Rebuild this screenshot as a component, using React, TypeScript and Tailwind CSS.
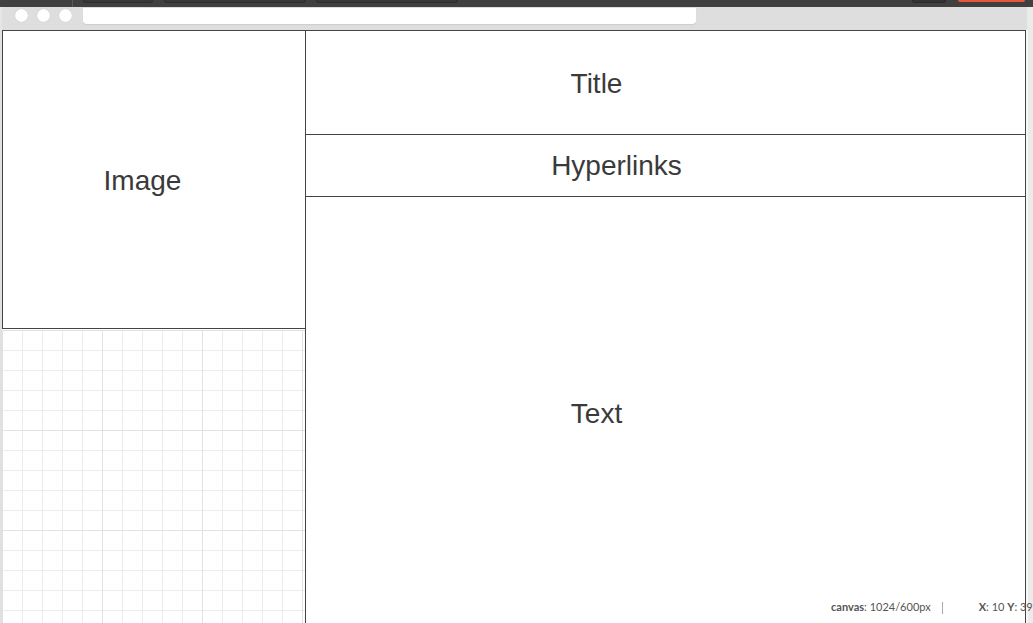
export default function App() {
  const tabs = [
    { w: 'w-[70px]', ml: 'ml-[10px]' },
    { w: 'w-[142px]', ml: 'ml-[11px]' },
    { w: 'w-[142px]', ml: 'ml-[10px]' },
  ];

  return (
    <div className="w-[1033px] h-[623px] overflow-hidden bg-[#dedede] relative font-['Liberation_Sans',Arial,sans-serif]">
      {/* window chrome: dark tab strip */}
      <div className="h-[7px] bg-[#404040] flex items-start">
        <div className="ml-[72px] w-px h-[7px] bg-[#5a5a5a]" />
        {tabs.map((t, i) => (
          <div key={i} className={`${t.w} ${t.ml} h-[3px] bg-[#383838] border border-t-0 border-[#2e2e2e] rounded-b-[3px]`} />
        ))}
        <div className="ml-[454px] w-[34px] h-[3px] bg-[#333] border border-t-0 border-[#2a2a2a] rounded-b-[3px]" />
        <div className="ml-[12px] w-[67px] h-[2px] bg-[#e8573c] rounded-b-[2px]" />
      </div>

      {/* toolbar */}
      <div className="h-[23px] flex items-start border-l-2 border-[#e6e6e6]">
        <div className="flex gap-[9px] ml-[13px] mt-[1.5px]">
          <div className="w-[13px] h-[13px] rounded-full bg-white shadow-[0_0_1px_rgba(0,0,0,0.2)]" />
          <div className="w-[13px] h-[13px] rounded-full bg-white shadow-[0_0_1px_rgba(0,0,0,0.2)]" />
          <div className="w-[13px] h-[13px] rounded-full bg-white shadow-[0_0_1px_rgba(0,0,0,0.2)]" />
        </div>
        <div className="ml-[11px] mt-px w-[613px] h-[16px] bg-white rounded-b-[4px] shadow-[0_1px_1px_rgba(0,0,0,0.08)]" />
        <div className="flex-1" />
        <div className="w-[6px] h-[23px] bg-[#ebebeb]" />
      </div>

      {/* body */}
      <div className="flex">
        <div className="w-[2px] bg-[#e0e0e0]" />

        {/* canvas */}
        <div className="w-[1024px] flex bg-white text-[#3a3a3a] text-[28px]">
          {/* left column */}
          <div className="w-[303px] flex flex-col">
            <div className="h-[299px] border border-r-0 border-[#444] flex items-center justify-center pr-[23px] pt-[3px]">
              Image
            </div>
            <div className="h-[320px] mt-px [background-image:linear-gradient(to_right,#e2e2e2_1px,transparent_1px),linear-gradient(to_bottom,#e2e2e2_1px,transparent_1px),linear-gradient(to_right,#ececec_1px,transparent_1px),linear-gradient(to_bottom,#ececec_1px,transparent_1px)] [background-size:100px_100px,100px_100px,20px_20px,20px_20px]" />
          </div>

          {/* right column */}
          <div className="w-[721px] border border-[#444] flex flex-col">
            <div className="h-[104px] border-b border-[#444] flex items-center justify-center pr-[138px] pt-[2px]">
              Title
            </div>
            <div className="h-[62px] border-b border-[#444] flex items-center justify-center pr-[98px]">
              Hyperlinks
            </div>
            <div className="h-[434px] flex items-center justify-center pr-[138px]">
              Text
            </div>
          </div>
        </div>

        <div className="w-[2px] bg-[#f7f7f7]" />
        <div className="w-[5px] h-[600px] bg-[#ebebeb]" />
      </div>

      {/* status overlay */}
      <div className="absolute left-[831px] top-[601px] h-[13px] flex items-center text-[11px] text-[#555] font-['Lato',sans-serif] whitespace-nowrap">
        <span>
          <b className="font-bold">canvas</b>: 1024/600px
        </span>
        <span className="ml-[11px] w-px h-[12px] bg-[#aaa]" />
        <span className="ml-[36px]">
          <b className="font-bold">X</b>: 10 <b className="font-bold">Y</b>: 39
        </span>
      </div>
    </div>
  );
}
